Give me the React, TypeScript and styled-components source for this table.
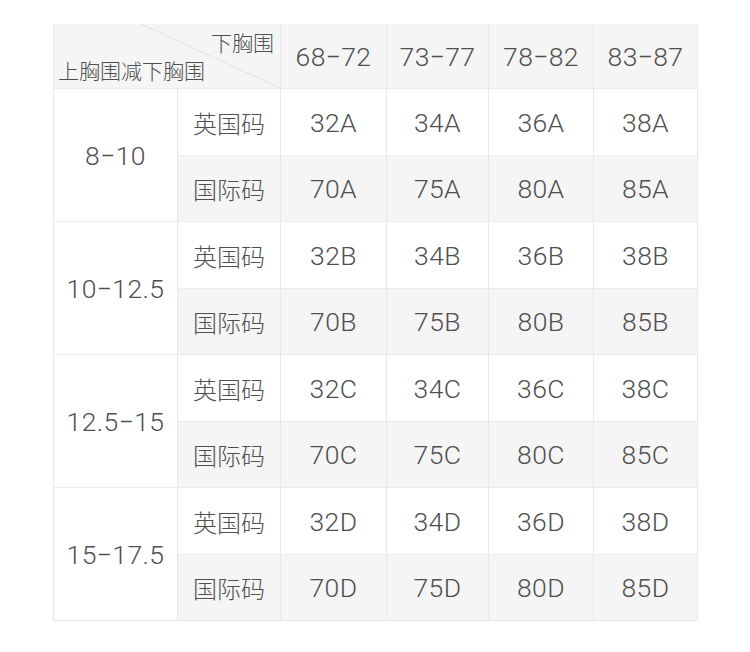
import * as React from 'react';
import styled, {createGlobalStyle} from 'styled-components';

const GlobalStyle = createGlobalStyle`
  body {
    margin: 0;
    background: #ffffff;
  }
`;

const Page = styled.div`
  padding: 24px 0 0 53px;
  width: 750px;
  height: 652px;
  box-sizing: border-box;
`;

const Grid = styled.div`
  display: grid;
  grid-template-columns: 124px 103px 106px 102px 105px 104px;
  grid-template-rows: 64px repeat(4, 67px 66px);
  width: 644px;
  border-left: 1px solid #e8e8e8;
  border-bottom: 1px solid #e8e8e8;
  box-sizing: border-box;
  color: #4f4f4f;
  font-family: Roboto, 'Noto Sans CJK SC', sans-serif;
`;

const Cell = styled.div<{ $shade?: boolean; $span?: number }>`
  display: flex;
  align-items: center;
  justify-content: center;
  background: ${({ $shade }) => ($shade ? '#f5f5f5' : '#ffffff')};
  border-right: 1px solid #e8e8e8;
  border-top: 1px solid #ececec;
  font-size: 26.5px;
  font-weight: 300;
  letter-spacing: 0.4px;
  ${({ $span }) => ($span ? `grid-row: span ${$span};` : '')}
`;

const HeadCell = styled(Cell)`
  grid-column: span 2;
  position: relative;
  flex-direction: column;
  align-items: stretch;
  justify-content: flex-start;
  border-top: none;
  padding: 4px 6px 0 4px;
`;

const HeadText = styled.span<{ $align: 'left' | 'right' }>`
  text-align: ${({ $align }) => $align};
  font-family: 'Noto Sans CJK SC', sans-serif;
  font-weight: 300;
  font-size: 21px;
  line-height: 28px;
  letter-spacing: 0;
`;

const Diagonal = styled.svg`
  position: absolute;
  left: 0;
  top: 0;
  width: 100%;
  height: 100%;
  pointer-events: none;
`;

const ColHead = styled(Cell)`
  border-top: none;
`;

const Label = styled(Cell)`
  font-family: 'Noto Sans CJK SC', sans-serif;
  font-weight: 300;
  font-size: 24px;
  letter-spacing: 0;
`;

const ranges = ['68−72', '73−77', '78−82', '83−87'];
const groups = [
  { diff: '8−10', cup: 'A' },
  { diff: '10−12.5', cup: 'B' },
  { diff: '12.5−15', cup: 'C' },
  { diff: '15−17.5', cup: 'D' },
];
const uk = [32, 34, 36, 38];
const intl = [70, 75, 80, 85];

export default function App() {
  return (
    <>
      <GlobalStyle />
      <Page>
        <Grid>
          <HeadCell $shade>
            <Diagonal viewBox="0 0 226 64" preserveAspectRatio="none">
              <line x1="87" y1="0" x2="226" y2="64" stroke="#e2e2e2" strokeWidth="1" />
            </Diagonal>
            <HeadText $align="right">下胸围</HeadText>
            <HeadText $align="left">上胸围减下胸围</HeadText>
          </HeadCell>
          {ranges.map((r) => (
            <ColHead key={r} $shade>
              {r}
            </ColHead>
          ))}
          {groups.map((g) => (
            <React.Fragment key={g.cup}>
              <Cell $span={2}>{g.diff}</Cell>
              <Label>英国码</Label>
              {uk.map((n) => (
                <Cell key={n}>
                  {n}
                  {g.cup}
                </Cell>
              ))}
              <Label $shade>国际码</Label>
              {intl.map((n) => (
                <Cell key={n} $shade>
                  {n}
                  {g.cup}
                </Cell>
              ))}
            </React.Fragment>
          ))}
        </Grid>
      </Page>
    </>
  );
}
